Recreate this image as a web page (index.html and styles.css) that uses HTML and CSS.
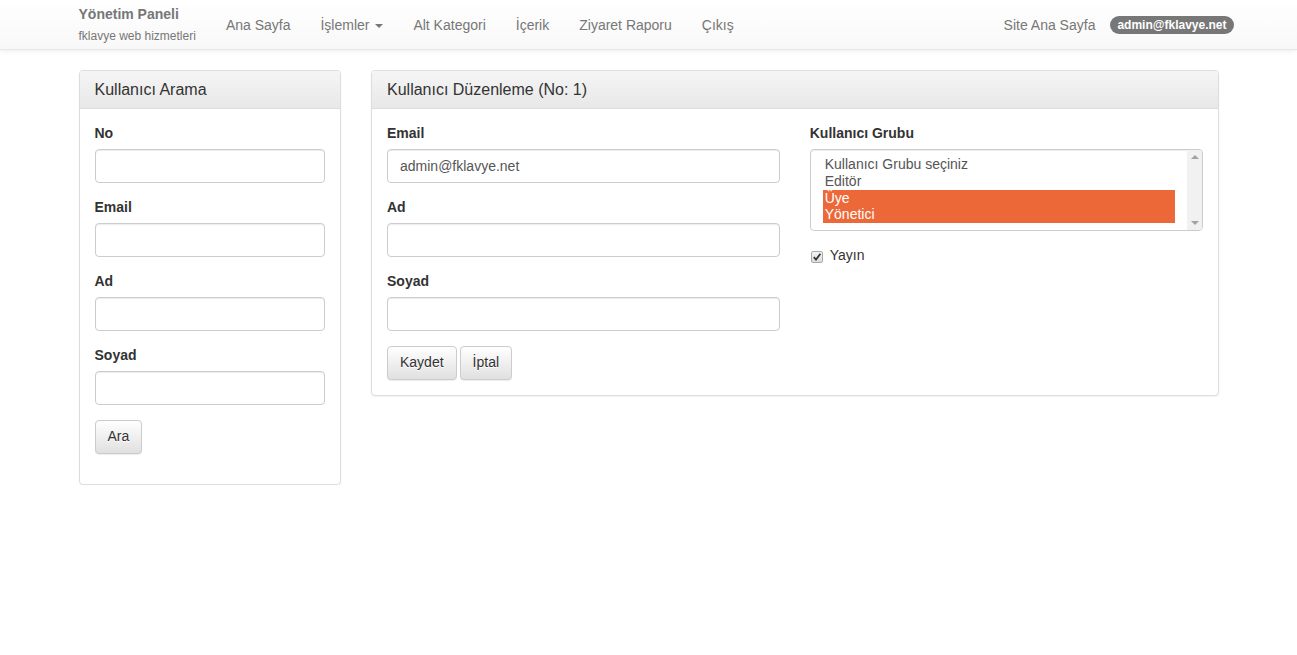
FILE: index.html
```html
<!DOCTYPE html>
<html lang="tr">
<head>
    <meta charset="UTF-8">
    <meta name="viewport" content="width=device-width, initial-scale=1.0">
    <title>Kullanıcı Düzenleme - Yönetim Paneli</title>
    <link rel="stylesheet" href="styles.css">
</head>
<body>

    <nav class="navbar">
        <div class="container navbar-inner">
            <a class="brand" href="#">
                <span class="brand-title">Yönetim Paneli</span>
                <span class="brand-sub">fklavye web hizmetleri</span>
            </a>
            <ul class="nav">
                <li><a href="#">Ana Sayfa</a></li>
                <li><a href="#">İşlemler <span class="caret"></span></a></li>
                <li><a href="#">Alt Kategori</a></li>
                <li><a href="#">İçerik</a></li>
                <li><a href="#">Ziyaret Raporu</a></li>
                <li><a href="#">Çıkış</a></li>
            </ul>
            <ul class="nav nav-right">
                <li><a href="#">Site Ana Sayfa</a></li>
                <li class="nav-badge"><span class="badge">admin@fklavye.net</span></li>
            </ul>
        </div>
    </nav>

    <div class="container">
        <div class="row">
            <div class="col-3">
                <div class="panel">
                    <div class="panel-heading">Kullanıcı Arama</div>
                    <div class="panel-body">
                        <form>
                            <div class="form-group">
                                <label for="s-no">No</label>
                                <input type="text" id="s-no" class="form-control">
                            </div>
                            <div class="form-group">
                                <label for="s-email">Email</label>
                                <input type="text" id="s-email" class="form-control">
                            </div>
                            <div class="form-group">
                                <label for="s-ad">Ad</label>
                                <input type="text" id="s-ad" class="form-control">
                            </div>
                            <div class="form-group">
                                <label for="s-soyad">Soyad</label>
                                <input type="text" id="s-soyad" class="form-control">
                            </div>
                            <div class="form-group">
                                <button type="button" class="btn">Ara</button>
                            </div>
                        </form>
                    </div>
                </div>
            </div>

            <div class="col-9">
                <div class="panel">
                    <div class="panel-heading">Kullanıcı Düzenleme (No: 1)</div>
                    <div class="panel-body">
                        <form class="row">
                            <div class="col-6">
                                <div class="form-group">
                                    <label for="email">Email</label>
                                    <input type="text" id="email" class="form-control" value="admin@fklavye.net">
                                </div>
                                <div class="form-group">
                                    <label for="ad">Ad</label>
                                    <input type="text" id="ad" class="form-control">
                                </div>
                                <div class="form-group">
                                    <label for="soyad">Soyad</label>
                                    <input type="text" id="soyad" class="form-control">
                                </div>
                                <div class="btn-row">
                                    <button type="button" class="btn">Kaydet</button>
                                    <button type="button" class="btn">İptal</button>
                                </div>
                            </div>
                            <div class="col-6">
                                <div class="form-group">
                                    <label for="grup">Kullanıcı Grubu</label>
                                    <div class="select-wrap">
                                        <select id="grup" class="form-control group-select" multiple>
                                            <option>Kullanıcı Grubu seçiniz</option>
                                            <option>Editör</option>
                                            <option selected>Üye</option>
                                            <option selected>Yönetici</option>
                                        </select>
                                        <span class="fake-scroll">
                                            <span class="arrow-up"></span>
                                            <span class="arrow-down"></span>
                                        </span>
                                    </div>
                                </div>
                                <div class="checkbox">
                                    <label><input type="checkbox" checked> Yayın</label>
                                </div>
                            </div>
                        </form>
                    </div>
                </div>
            </div>
        </div>
    </div>

</body>
</html>
```

FILE: styles.css
```css
* {
    box-sizing: border-box;
}
body {
    margin: 0;
    font-family: "Liberation Sans", Arial, sans-serif;
    font-size: 14px;
    line-height: 1.42857;
    color: #333;
    background-color: #fff;
}
a {
    text-decoration: none;
}
form {
    margin: 0;
}
.container {
    width: 1170px;
    margin: 0 auto;
    padding: 0 15px;
}
.row {
    display: flex;
    margin: 0 -15px;
}
.col-3, .col-6, .col-9 {
    padding: 0 15px;
}
.col-3 { width: 25%; }
.col-6 { width: 50%; }
.col-9 { width: 75%; }

/* navbar */
.navbar {
    height: 50px;
    margin-bottom: 20px;
    background-image: linear-gradient(to bottom, #fff 0, #f8f8f8 100%);
    border-bottom: 1px solid #e7e7e7;
    box-shadow: inset 0 1px 0 rgba(255, 255, 255, 0.15), 0 1px 5px rgba(0, 0, 0, 0.075);
}
.navbar-inner {
    display: flex;
    height: 49px;
}
.brand {
    display: flex;
    flex-direction: column;
    margin-left: -15px;
    padding: 5px 15px 0;
    color: #777;
}
.brand-title {
    font-weight: bold;
    font-size: 14px;
    line-height: 18px;
}
.brand-sub {
    font-size: 12px;
    line-height: 18px;
    margin-top: 4px;
}
.nav {
    display: flex;
    list-style: none;
    margin: 0;
    padding: 0;
}
.nav a {
    display: block;
    padding: 15px;
    line-height: 20px;
    color: #777;
}
.nav-right {
    margin-left: auto;
    margin-right: -15px;
}
.nav-badge {
    padding-top: 15px;
}
.caret {
    display: inline-block;
    width: 0;
    height: 0;
    margin-left: 2px;
    vertical-align: middle;
    border-top: 4px solid;
    border-right: 4px solid transparent;
    border-left: 4px solid transparent;
}
.badge {
    display: inline-block;
    padding: 3px 7px;
    font-size: 12px;
    font-weight: bold;
    line-height: 1;
    color: #fff;
    background-color: #777;
    border-radius: 10px;
}

/* panels */
.panel {
    background-color: #fff;
    border: 1px solid #ddd;
    border-radius: 4px;
    box-shadow: 0 1px 2px rgba(0, 0, 0, 0.05);
}
.panel-heading {
    padding: 10px 15px;
    font-size: 16px;
    line-height: 17px;
    color: #333;
    background-image: linear-gradient(to bottom, #f5f5f5 0, #e8e8e8 100%);
    border-bottom: 1px solid #ddd;
    border-radius: 3px 3px 0 0;
}
.panel-body {
    padding: 15px;
}

/* form */
.form-group {
    margin-bottom: 15px;
}
label {
    display: inline-block;
    margin-bottom: 5px;
    font-weight: bold;
}
.form-control {
    display: block;
    width: 100%;
    height: 34px;
    padding: 6px 12px;
    font-family: inherit;
    font-size: 14px;
    line-height: 1.42857;
    color: #555;
    background-color: #fff;
    border: 1px solid #ccc;
    border-radius: 4px;
    box-shadow: inset 0 1px 1px rgba(0, 0, 0, 0.075);
}
.select-wrap {
    position: relative;
}
.group-select {
    height: 82px;
    padding-right: 27px;
    overflow: hidden;
}
.group-select option {
    padding: 0 2px;
    line-height: 17px;
    color: #555;
}
.group-select option:checked {
    background: #ec6839 linear-gradient(0deg, #ec6839 0%, #ec6839 100%);
    color: #fff;
}
.fake-scroll {
    position: absolute;
    top: 1px;
    right: 1px;
    bottom: 1px;
    width: 15px;
    background-color: #f1f1f1;
    border-radius: 0 3px 3px 0;
}
.arrow-up, .arrow-down {
    position: absolute;
    left: 4px;
    width: 0;
    height: 0;
    border-left: 4px solid transparent;
    border-right: 4px solid transparent;
}
.arrow-up {
    top: 5px;
    border-bottom: 4px solid #a3a3a3;
}
.arrow-down {
    bottom: 5px;
    border-top: 4px solid #a3a3a3;
}
.checkbox label {
    position: relative;
    padding-left: 20px;
    margin: 0;
    font-weight: normal;
}
.checkbox input {
    position: absolute;
    appearance: none;
    -webkit-appearance: none;
    width: 12px;
    height: 12px;
    margin: 5px 0 0 -19px;
    border: 1px solid #a8a8a8;
    border-radius: 2px;
    background: linear-gradient(to bottom, #f4f4f4, #dcdcdc);
}
.checkbox input:checked {
    background: url("data:image/svg+xml,%3Csvg xmlns='http://www.w3.org/2000/svg' viewBox='0 0 10 10'%3E%3Cpath d='M1.8 5.2 L4 7.6 L8.4 1.8' fill='none' stroke='%23333' stroke-width='1.8'/%3E%3C/svg%3E") center / 10px 10px no-repeat, linear-gradient(to bottom, #f4f4f4, #dcdcdc);
}

/* buttons */
.btn-row {
    display: flex;
    gap: 3px;
}
.btn {
    padding: 6px 12px;
    font-family: inherit;
    font-size: 14px;
    line-height: 1.42857;
    color: #333;
    text-shadow: 0 1px 0 #fff;
    background-image: linear-gradient(to bottom, #fff 0, #e0e0e0 100%);
    border: 1px solid #ccc;
    border-radius: 4px;
    box-shadow: inset 0 1px 0 rgba(255, 255, 255, 0.15), 0 1px 1px rgba(0, 0, 0, 0.075);
    cursor: pointer;
}
.btn:hover {
    background-color: #e0e0e0;
    background-position: 0 -15px;
}
```
